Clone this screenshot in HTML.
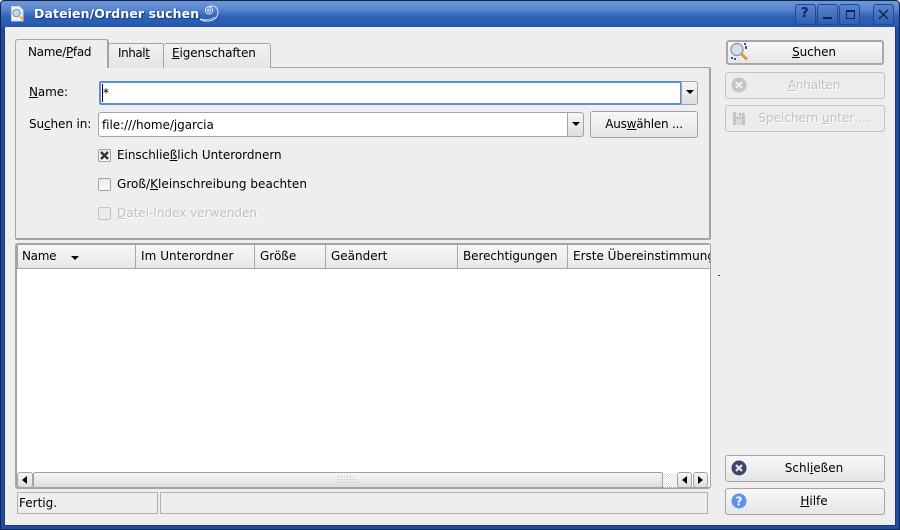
<!DOCTYPE html>
<html><head><meta charset="utf-8">
<style>
*{box-sizing:border-box}
html,body{margin:0;padding:0;width:900px;height:530px;overflow:hidden;background:#fff}
body{font:12px/14px "DejaVu Sans",sans-serif;color:#000;position:relative}
.a,.t{position:absolute;white-space:nowrap}
u{text-decoration:underline;text-underline-offset:1px}
.btn{position:absolute;border:1px solid #a3a3a3;border-radius:3px;background:linear-gradient(#f8f8f8,#e6e6e6);text-align:center;padding-left:18px}
.dis{background:#ececec;border-color:#c4c4c4;color:#c0c0c0;text-shadow:1px 1px 0 #fff}
.wb{position:absolute;top:4px;width:21px;height:21px;border:1px solid #1f4a97;border-radius:3px;background:linear-gradient(#5a84cc,#2f5fb4)}
.h{position:absolute;top:245px;height:24px;border-right:1px solid #a8a8a8;border-bottom:1px solid #a8a8a8;background:linear-gradient(#f6f6f6,#e8e8e8);padding:4px 0 0 5px;overflow:hidden;white-space:nowrap}
.cb{position:absolute;left:98px;width:13px;height:13px;border:1px solid #a3a3a3;border-radius:2px;background:linear-gradient(#e8e8e8,#fafafa)}
.tab{position:absolute;background:linear-gradient(#f2f2f2,#e4e4e4);border:1px solid #a3a3a3;border-bottom:none;border-radius:3px 3px 0 0}
.sb{position:absolute;background:linear-gradient(#f6f6f6,#dedede);border:1px solid #a3a3a3;border-radius:3px}
</style></head><body>
<div class="a" style="left:0;top:0;width:900px;height:530px;background:#1f4ea8;border:1px solid #10264f;border-radius:4px 4px 0 0"></div>
<div class="a" style="left:1px;top:1px;width:898px;height:26px;background:linear-gradient(#6f97d8 0,#5b87d0 30%,#2e62b8 60%,#2558ad 100%);border-radius:3px 3px 0 0"></div>
<div class="a" style="left:4px;top:27px;width:892px;height:499px;background:#eeeeee;border-left:1px solid #22386a;border-right:1px solid #22386a;border-bottom:1px solid #22386a"></div>

<svg class="a" style="left:9px;top:5px" width="18" height="18" viewBox="0 0 18 18"><path d="M2.500 1.500h8l3.500 3.500v11h-11.500z" fill="#f2f4f8" stroke="#c8d0dc"/><circle cx="7.500" cy="8" r="3.800" fill="#bcd6ee" stroke="#7f90a8"/><path d="M11 11.500l3.500 3.500" stroke="#e8b04c" stroke-width="2.200"/></svg>
<div class="t" style="left:34px;top:6px;font-weight:bold;font-size:12.500px;line-height:15px;letter-spacing:.1px;color:#fff;text-shadow:1px 1px 1px #173a80">Dateien/Ordner suchen</div>
<svg class="a" style="left:198px;top:3px" width="23" height="22" viewBox="0 0 23 22" fill="none" stroke="#dfe8f6" stroke-width="1"><path d="M11 3.500c5-2 9 1 9 6 0 7-9 11-18 7"/><path d="M2 16c5 1 11 1 15-2" stroke-opacity=".7"/><circle cx="11" cy="7.500" r="3.600"/><circle cx="11" cy="7.500" r="1.400"/></svg>

<div class="wb" style="left:795px"></div>
<div class="wb" style="left:817px"></div>
<div class="wb" style="left:839px"></div>
<div class="wb" style="left:873px"></div>
<div class="t" style="left:801px;top:7px;font-weight:bold;font-size:13px;color:#10244e">?</div>
<div class="a" style="left:823px;top:17px;width:9px;height:2px;background:#10244e"></div>
<div class="a" style="left:846px;top:10px;width:9px;height:9px;border:1px solid #10244e;border-top-width:2px"></div>
<svg class="a" style="left:878px;top:9px" width="11" height="11" viewBox="0 0 11 11"><path d="M1 1l9 9M10 1l-9 9" stroke="#10244e" stroke-width="1.400"/></svg>

<!-- tab panel -->
<div class="a" style="left:15px;top:67px;width:696px;height:173px;background:#eeeeee;border:1px solid #a3a3a3;border-bottom:2px solid #a3a3a3;border-right:2px solid #a3a3a3;border-radius:0 2px 2px 2px"></div>
<div class="tab" style="left:108px;top:43px;width:56px;height:25px"></div>
<div class="t" style="left:118px;top:46px;letter-spacing:-.45px">Inhal<u>t</u></div>
<div class="tab" style="left:163px;top:43px;width:108px;height:25px"></div>
<div class="t" style="left:172px;top:46px;letter-spacing:-.1px"><u>E</u>igenschaften</div>
<div class="tab" style="left:15px;top:39px;width:94px;height:29px;background:#eeeeee;border-right-width:2px"></div>
<div class="t" style="left:28px;top:45px;letter-spacing:-.3px">Name/<u>P</u>fad</div>
<div class="a" style="left:16px;top:66px;width:91px;height:3px;background:#eeeeee"></div>

<div class="t" style="left:29px;top:85px;letter-spacing:-.1px"><u>N</u>ame:</div>
<div class="a" style="left:99px;top:81px;width:583px;height:24px;background:#fff;border:2px solid #5b8fdc;border-radius:2px"></div>
<div class="t" style="left:103px;top:86px">*</div>
<div class="a" style="left:102px;top:84px;width:1px;height:18px;background:#000"></div>
<div class="sb" style="left:681px;top:81px;width:17px;height:24px;border-radius:0 3px 3px 0"></div>
<div class="a" style="left:686px;top:90px;border:4px solid transparent;border-top:4px solid #000;border-bottom:0"></div>

<div class="t" style="left:29px;top:117px;letter-spacing:-.1px">Su<u>c</u>hen in:</div>
<div class="a" style="left:98px;top:112px;width:470px;height:25px;background:#fff;border:1px solid #a3a3a3;border-radius:3px 0 0 3px"></div>
<div class="t" style="left:102px;top:118px;letter-spacing:-.05px">file:///home/jgarcia</div>
<div class="sb" style="left:567px;top:112px;width:17px;height:25px;border-radius:0 3px 3px 0"></div>
<div class="a" style="left:572px;top:122px;border:4px solid transparent;border-top:4px solid #000;border-bottom:0"></div>
<div class="btn" style="left:590px;top:111px;width:108px;height:27px;padding:5px 0 0 0;letter-spacing:-.22px">Aus<u>w</u>ählen ...</div>

<div class="cb" style="top:149px"></div>
<svg class="a" style="left:100px;top:151px" width="9" height="9" viewBox="0 0 9 9"><path d="M1 1l7 7M8 1l-7 7" stroke="#333" stroke-width="2.400"/></svg>
<div class="t" style="left:117px;top:148px;letter-spacing:-.03px">Einschlie<u>ß</u>lich Unterordnern</div>
<div class="cb" style="top:178px"></div>
<div class="t" style="left:117px;top:177px;letter-spacing:.04px">Groß/<u>K</u>leinschreibung beachten</div>
<div class="cb" style="top:207px;border-color:#c4c4c4;background:#ececec"></div>
<div class="t" style="left:117px;top:206px;color:#c0c0c0;text-shadow:1px 1px 0 #fff"><u>D</u>atei-Index verwenden</div>

<!-- list -->
<div class="a" style="left:15px;top:243px;width:696px;height:246px;background:#fff;border:1px solid #a3a3a3;border-width:1px 1px 2px 2px;border-radius:3px"></div>
<div class="a" style="left:17px;top:244px;width:693px;height:1px;background:#a8a8a8"></div>
<div class="h" style="left:17px;width:119px;border-left:1px solid #a8a8a8;padding-left:4px;letter-spacing:-.3px">Name</div>
<div class="a" style="left:71px;top:256px;border:4px solid transparent;border-top:4px solid #000;border-bottom:0"></div>
<div class="h" style="left:136px;width:119px;letter-spacing:.05px">Im Unterordner</div>
<div class="h" style="left:255px;width:71px">Größe</div>
<div class="h" style="left:326px;width:132px">Geändert</div>
<div class="h" style="left:458px;width:110px;letter-spacing:-.07px">Berechtigungen</div>
<div class="h" style="left:568px;width:142px;border-right:none">Erste Übereinstimmung</div>

<!-- scrollbar -->
<div class="sb" style="left:17px;top:472px;width:16px;height:16px"></div>
<div class="a" style="left:22px;top:476px;border:4px solid transparent;border-right:5px solid #000;border-left:0"></div>
<div class="sb" style="left:33px;top:472px;width:630px;height:16px;border-radius:2px"></div>
<div class="a" style="left:337px;top:475px;width:19px;height:10px;background-image:radial-gradient(#c0c0c0 .6px,transparent .8px);background-size:3px 3px"></div>
<div class="a" style="left:663px;top:473px;width:14px;height:15px;background-image:linear-gradient(45deg,#e4e4e4 25%,transparent 25%,transparent 75%,#e4e4e4 75%),linear-gradient(45deg,#e4e4e4 25%,transparent 25%,transparent 75%,#e4e4e4 75%);background-size:2px 2px;background-position:0 0,1px 1px"></div>
<div class="sb" style="left:677px;top:472px;width:15px;height:16px"></div>
<div class="sb" style="left:693px;top:472px;width:15px;height:16px"></div>
<div class="a" style="left:682px;top:476px;border:4px solid transparent;border-right:5px solid #000;border-left:0"></div>
<div class="a" style="left:698px;top:476px;border:4px solid transparent;border-left:5px solid #000;border-right:0"></div>

<!-- status -->
<div class="a" style="left:17px;top:492px;width:141px;height:22px;border:1px solid #b0b0b0;padding:3px 0 0 1px">Fertig.</div>
<div class="a" style="left:160px;top:492px;width:548px;height:22px;border:1px solid #b0b0b0"></div>

<div class="a" style="left:718px;top:275px;width:2px;height:1px;background:#444"></div>

<!-- side buttons -->
<div class="btn" style="left:726px;top:40px;width:158px;height:25px;padding-top:3px;border:2px solid #a8a8a8;letter-spacing:-.1px"><u>S</u>uchen</div>
<svg class="a" style="left:729px;top:42px" width="20" height="20" viewBox="0 0 20 20"><circle cx="8" cy="7.500" r="6" fill="#d8dfe4" stroke="#959ba2" stroke-width="1.400"/><path d="M12.500 12l5.500 5.500" stroke="#d99a3a" stroke-width="2.800"/><rect x="15" y="1" width="2" height="2" fill="#2a55b0"/><rect x="16" y="4" width="2" height="3" fill="#2a55b0"/><rect x="2" y="15" width="2" height="2" fill="#2a55b0"/><rect x="5" y="16" width="2" height="2" fill="#2a55b0"/></svg>

<div class="btn dis" style="left:725px;top:72px;width:160px;height:27px;padding-top:5px;letter-spacing:-.2px"><u>A</u>nhalten</div>
<svg class="a" style="left:731px;top:77px" width="16" height="16" viewBox="0 0 16 16"><circle cx="8" cy="8" r="7.500" fill="#c4c4c4"/><path d="M5 5l6 6M11 5l-6 6" stroke="#eee" stroke-width="2"/></svg>

<div class="btn dis" style="left:725px;top:105px;width:160px;height:27px;padding-top:5px">Speichern <u>u</u>nter ...</div>
<svg class="a" style="left:731px;top:110px" width="16" height="16" viewBox="0 0 16 16"><path d="M2 2h9l3 2v11h-12z" fill="#c4c4c4"/><rect x="5" y="2" width="6" height="5" fill="#e6e6e6"/><rect x="5" y="9" width="6" height="6" fill="#dadada"/><path d="M9 3v3" stroke="#aaa" stroke-width="1.500"/></svg>

<div class="btn" style="left:725px;top:455px;width:160px;height:27px;padding-top:5px">Schl<u>i</u>eßen</div>
<svg class="a" style="left:731px;top:460px" width="16" height="16" viewBox="0 0 16 16"><circle cx="8" cy="8" r="7.500" fill="#3e4668"/><path d="M5 5l6 6M11 5l-6 6" stroke="#e8e8ee" stroke-width="2.200"/></svg>

<div class="btn" style="left:725px;top:488px;width:160px;height:27px;padding-top:5px"><u>H</u>ilfe</div>
<svg class="a" style="left:731px;top:493px" width="16" height="16" viewBox="0 0 16 16"><circle cx="8" cy="8" r="7.500" fill="#5a92ee"/><text x="8" y="12.500" text-anchor="middle" font-family="DejaVu Sans" font-weight="bold" font-size="12" fill="#fff">?</text></svg>
</body></html>
